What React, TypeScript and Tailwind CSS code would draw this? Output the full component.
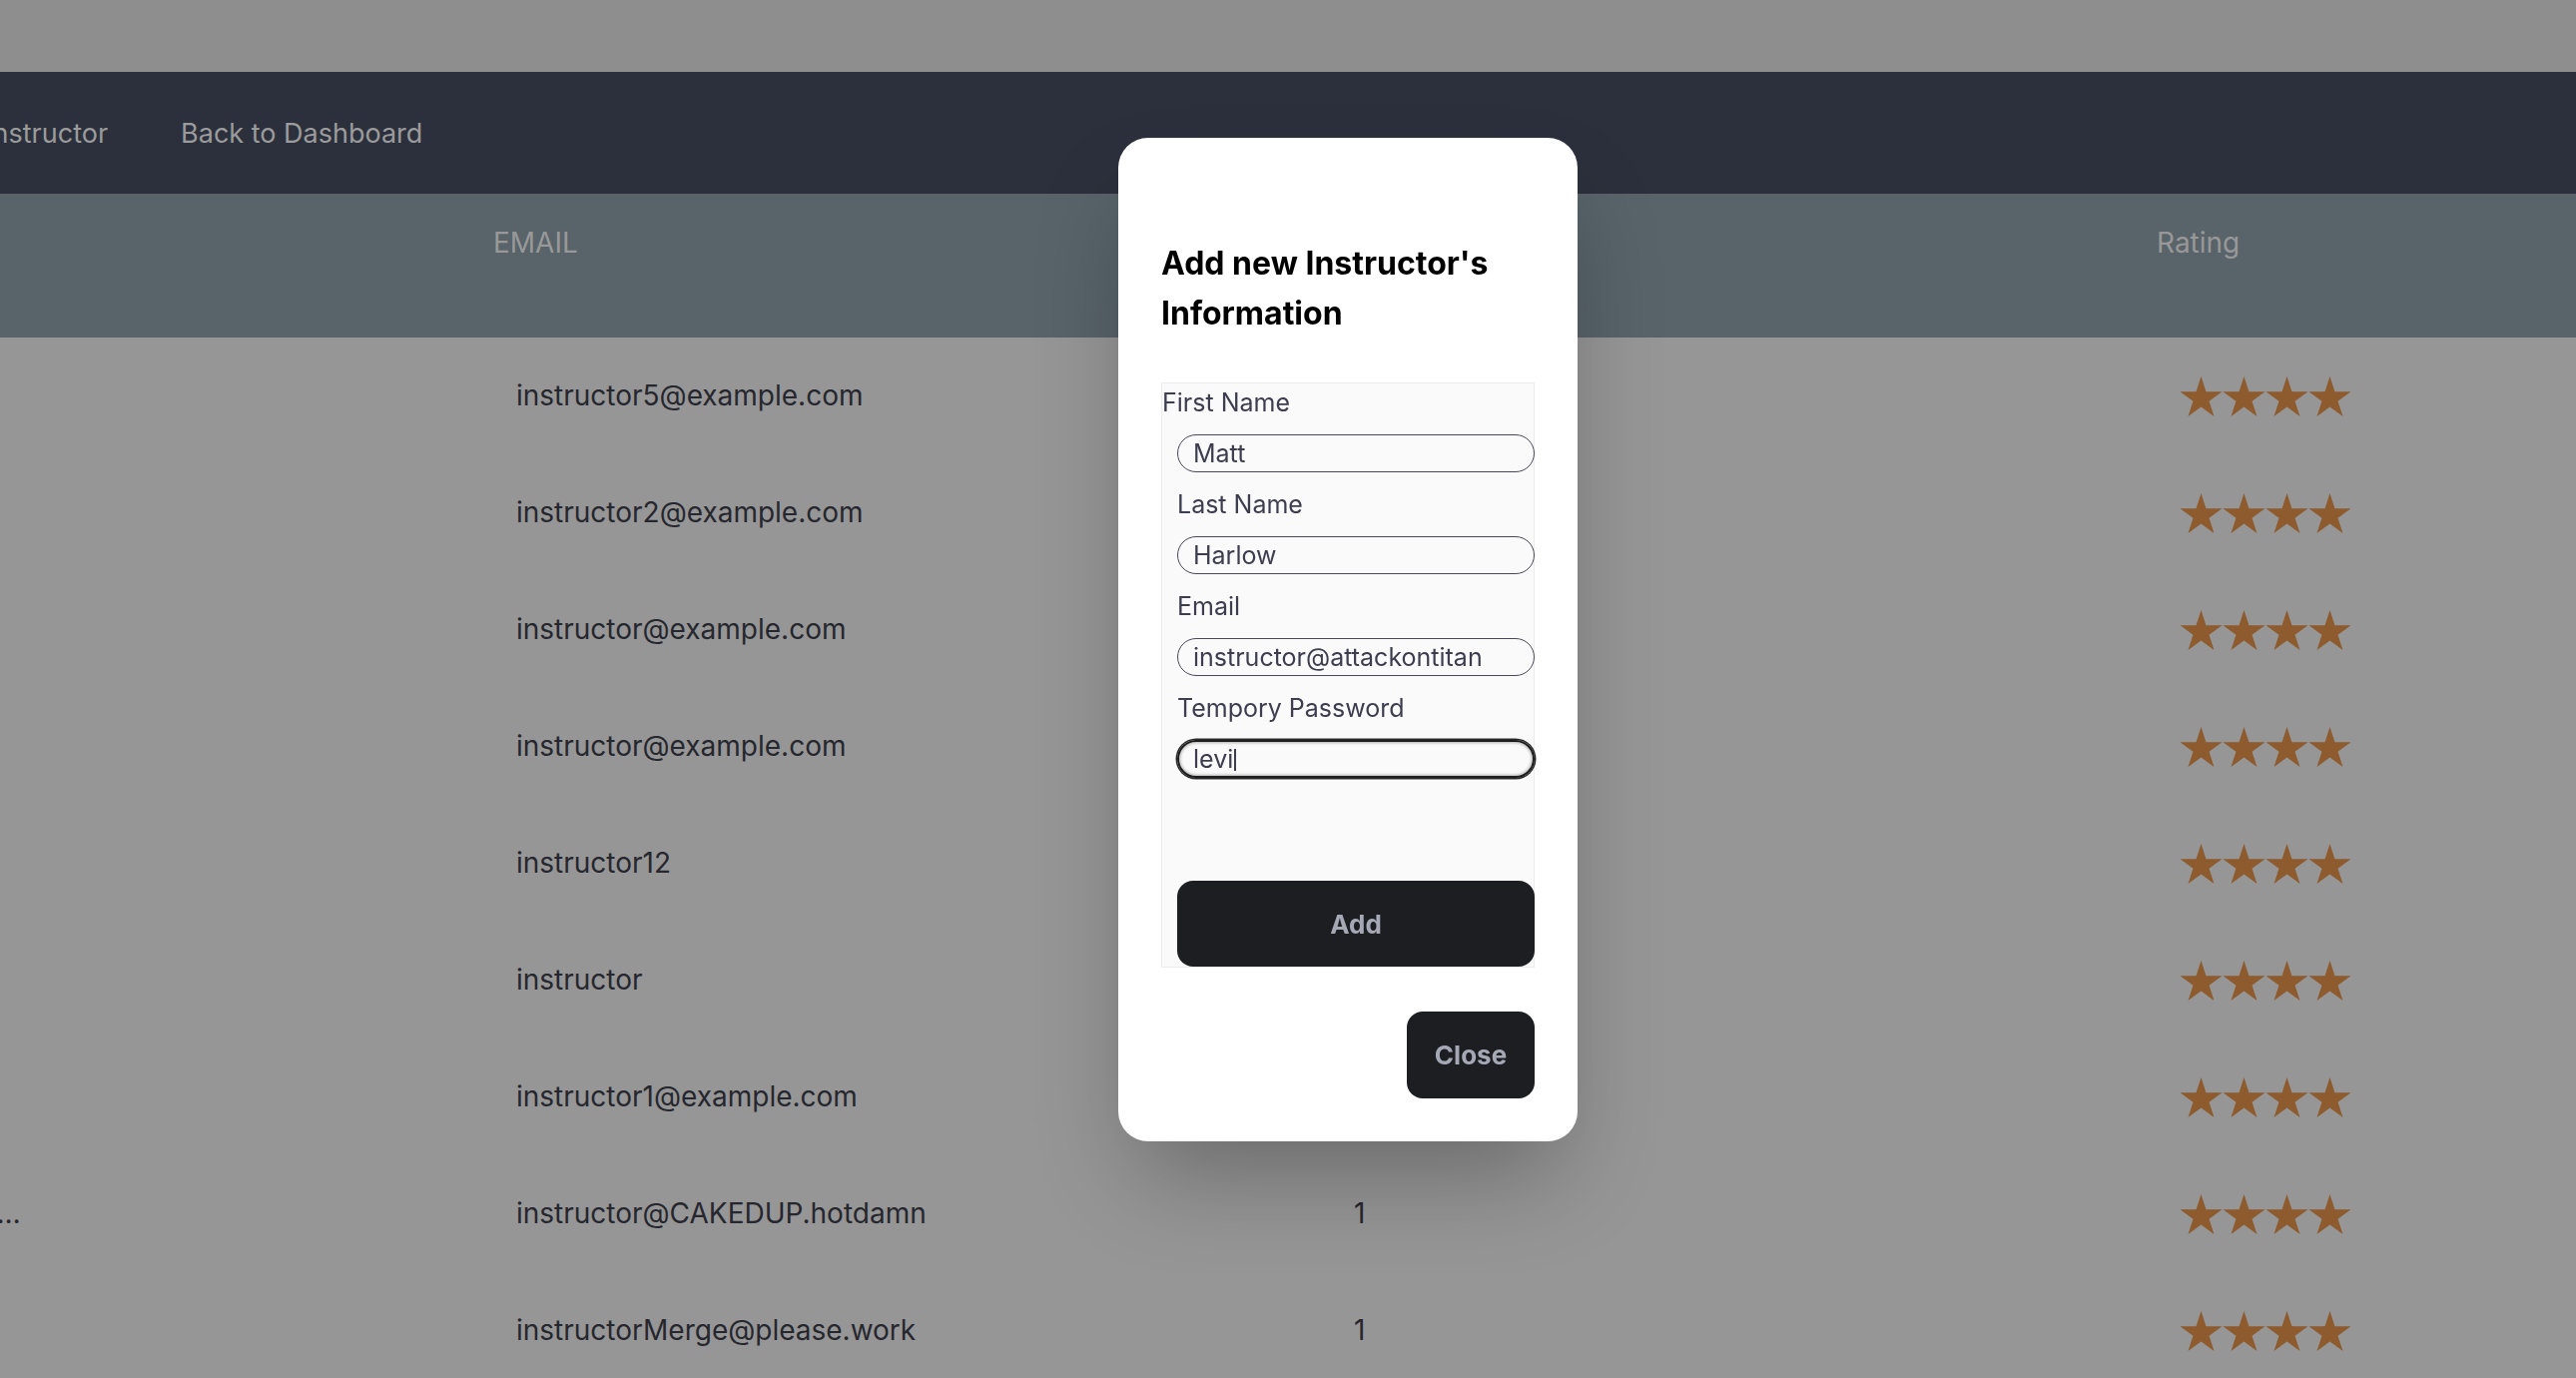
const rows = [
  { name: "Erwin Smith", email: "instructor5@example.com", count: 1 },
  { name: "Hange Zoe", email: "instructor2@example.com", count: 1 },
  { name: "Mike Zacharias", email: "instructor@example.com", count: 1 },
  { name: "Keith Shadis", email: "instructor@example.com", count: 1 },
  { name: "Nile Dok", email: "instructor12", count: 1 },
  { name: "Dot Pixis", email: "instructor", count: 1 },
  { name: "Moblit Berner", email: "instructor1@example.com", count: 1 },
  { name: "Cake Up Instructor With A Very Long Name For Testing", email: "instructor@CAKEDUP.hotdamn", count: 1 },
  { name: "Merge Test", email: "instructorMerge@please.work", count: 1 },
];

const Star = () => (
  <svg viewBox="0 0 100 95.1" className="w-[43px] h-[40px] shrink-0">
    <polygon
      fill="#8d5b2e"
      points="50,0 61.8,36.32 100,36.32 69.1,58.78 80.9,95.1 50,72.65 19.1,95.1 30.9,58.78 0,36.32 38.2,36.32"
    />
  </svg>
);

const Stars = () => (
  <div className="flex">
    <Star />
    <Star />
    <Star />
    <Star />
  </div>
);

const cols = "grid grid-cols-[470px_1270px_500px_780px]";

const Field = (props: { label: string; value: string; first?: boolean }) => (
  <>
    <label className={`block h-[39px] leading-[39px] text-[25px] text-[#3d3d4f] ${props.first ? "" : "ml-[15px] mt-[13px]"}`}>
      {props.label}
    </label>
    <input
      readOnly
      value={props.value}
      className="block ml-[15px] mt-3 h-[38px] w-[358px] rounded-full border-[1.5px] border-[#484859] bg-transparent pl-[15px] text-[25px] text-[#3d3d4f] outline-none"
    />
  </>
);

export default function App() {
  return (
    <div className="h-screen w-full overflow-hidden bg-[#969696] font-['Inter',sans-serif]">
      <div className="-ml-[440px] w-[3020px]">
        <div className="h-[72px] bg-[#8e8e8e]" />
        <nav className="flex h-[122px] items-center gap-[73px] bg-[#2b303c] pl-[366px] pt-[3px] text-[27px] text-[#9b9b9b]">
          <span>Add Instructor</span>
          <span>Back to Dashboard</span>
        </nav>
        <div className={`${cols} h-[144px] bg-[#58636a] pt-[28px] text-[28px] leading-[42px] text-[#989898]`}>
          <div />
          <div className="pl-[464px]">EMAIL</div>
          <div />
          <div className="pl-[360px]">Rating</div>
        </div>
        {rows.map((r, i) => (
          <div key={i} className={`${cols} h-[117px] items-center pb-[2px] text-[28px] text-[#26272e]`}>
            <div className="truncate pl-[40px]">{r.name}</div>
            <div className="pl-[487px] whitespace-nowrap">{r.email}</div>
            <div className="pl-[56px]">{r.count}</div>
            <div className="pl-[383px] pt-[2px]">
              <Stars />
            </div>
          </div>
        ))}
      </div>

      <div className="fixed left-[1120px] top-[138px] w-[460px] rounded-[30px] bg-white px-[43px] pt-[101px] pb-[43px] shadow-[0_50px_100px_-20px_rgba(0,0,0,0.3)]">
        <h2 className="text-[32px] font-bold leading-[50px] text-black">Add new Instructor's Information</h2>
        <form className="mt-[44px] border border-[#ebebeb] bg-[#fafafa]">
          <Field first label="First Name" value="Matt" />
          <Field label="Last Name" value="Harlow" />
          <Field label="Email" value="instructor@attackontitan" />
          <label className="ml-[15px] mt-[13px] block h-[39px] text-[25px] leading-[39px] text-[#3d3d4f]">Tempory Password</label>
          <div className="ml-[15px] mt-3 flex h-[38px] w-[358px] items-center rounded-full border-2 border-[#1d1d1f] pl-[14px] pt-[2px] text-[25px] text-[#3d3d4f] shadow-[0_0_0_1.5px_#2a2a2a,inset_0_0_3px_1px_rgba(0,0,0,0.3)]">
            levi
            <span className="ml-[1px] inline-block h-[22px] w-[2px] bg-[#3d3d4f]" />
          </div>
          <button
            type="button"
            className="ml-[15px] mt-[103px] block h-[86px] w-[358px] rounded-[16px] bg-[#1c1e22] text-[26px] font-bold text-[#a5a8b5]"
          >
            Add
          </button>
        </form>
        <div className="mt-[44px] flex justify-end">
          <button type="button" className="h-[87px] w-[128px] rounded-[16px] bg-[#1c1e22] text-[26px] font-bold text-[#a5a8b5]">
            Close
          </button>
        </div>
      </div>
    </div>
  );
}
